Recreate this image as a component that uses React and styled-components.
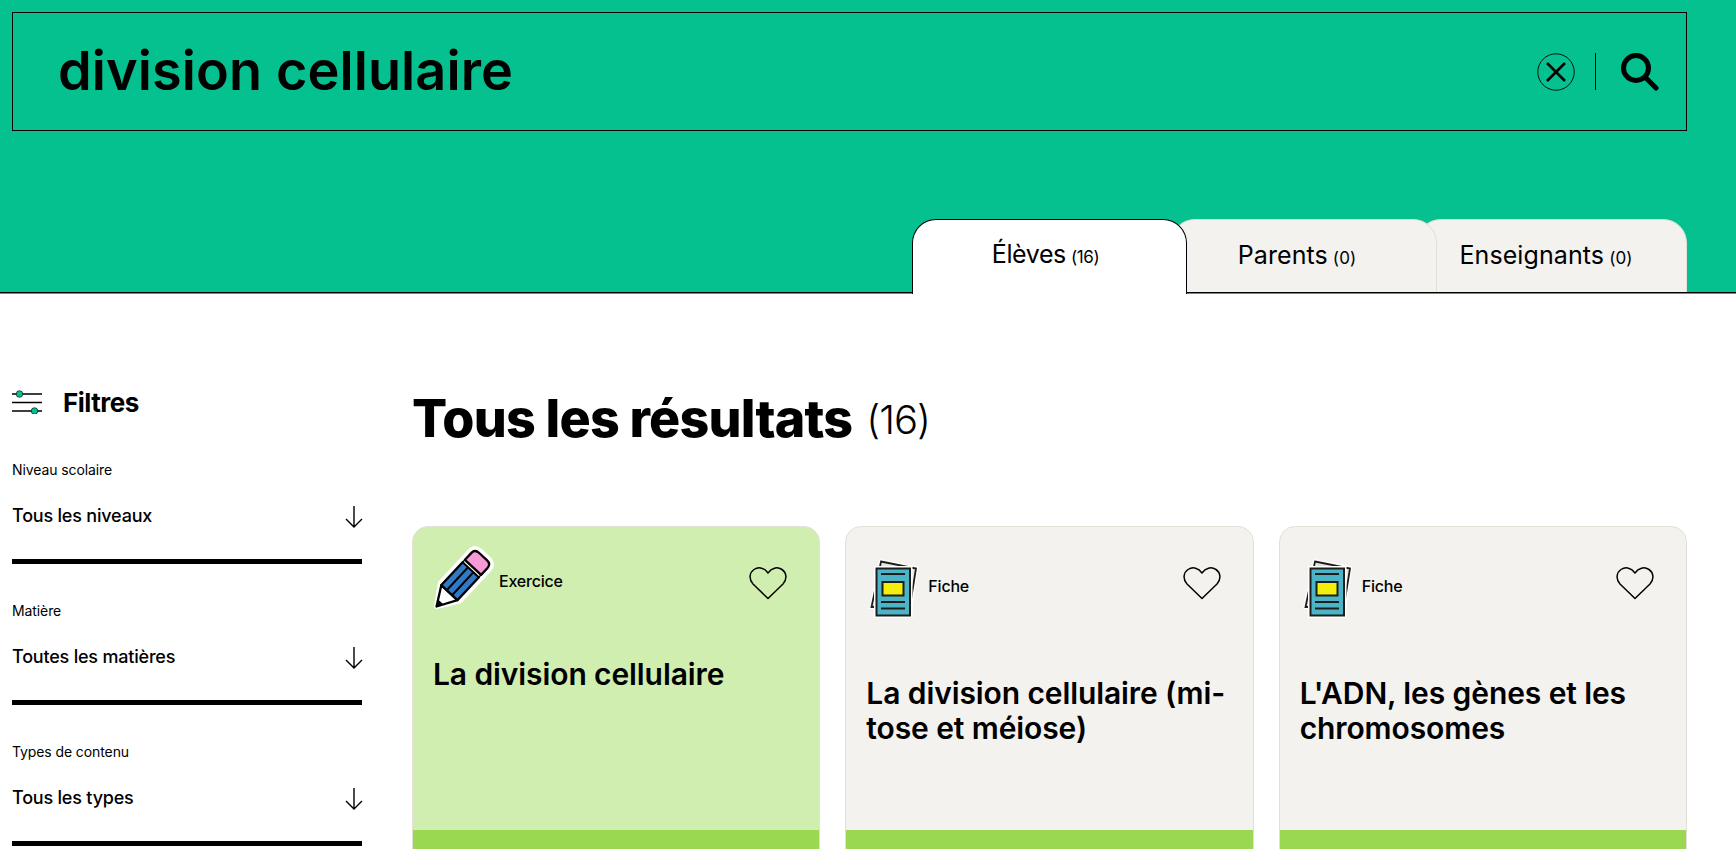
import React from "react";
import styled, { createGlobalStyle } from "styled-components";

const Colors = {
  green: "#05c18f",
  lime: "#d0eeb0",
  limeDark: "#9ad852",
  grey: "#f3f2ee",
  line: "#e4e0d8",
};

const GlobalStyle = createGlobalStyle`
  html, body {
    margin: 0;
    height: 100%;
    overflow: hidden;
    background: #fff;
    color: #000;
    font-family: Inter, "Liberation Sans", sans-serif;
  }
  * { box-sizing: border-box; }
`;

const Header = styled.header`
  height: 294px;
  background: ${Colors.green};
  padding: 12px 49px 0 12px;
  display: flex;
  flex-direction: column;
  justify-content: space-between;
`;
const SearchBox = styled.div`
  height: 119px;
  border: 1px solid #000;
  display: flex;
  align-items: center;
  padding: 0 27px 0 45px;
`;
const SearchText = styled.div`
  flex: 1;
  font-size: 54px;
  font-weight: 600;
  letter-spacing: 0.1px;
  margin-top: -2px;
`;
const IconButton = styled.button`
  display: flex;
  padding: 0;
  border: 0;
  background: none;
`;
const Divider = styled.span`
  width: 1px;
  height: 37px;
  background: #000;
  margin: 0 25px 0 20px;
`;
const TabBar = styled.nav`
  margin: 0 -49px 1px -12px;
  padding-right: 49px;
  height: 74px;
  border-bottom: 1px solid #000;
  display: flex;
  justify-content: flex-end;
`;
const Tab = styled.button`
  position: relative;
  z-index: ${(p) => p.$layer};
  width: ${(p) => p.$width}px;
  height: ${(p) => (p.$active ? 75 : 73)}px;
  margin-left: ${(p) => p.$overlap}px;
  padding: 0 ${(p) => p.$shift}px ${(p) => (p.$active ? 6 : 3)}px 0;
  border: 1px solid ${(p) => (p.$active ? "#000" : Colors.line)};
  border-bottom: 0;
  border-radius: 24px 24px 0 0;
  background: ${(p) => (p.$active ? "#fff" : Colors.grey)};
  color: #000;
  font: 400 25px Inter, "Liberation Sans", sans-serif;
  letter-spacing: ${(p) => (p.$active ? -0.4 : 0.1)}px;
`;
const TabCount = styled.span`
  font-size: 17px;
  margin-left: 5px;
`;

const Page = styled.main`
  height: 555px;
  overflow: hidden;
  padding: 96px 49px 0 12px;
  display: grid;
  grid-template-columns: 350px 1fr;
  column-gap: 50px;
`;

const FilterTitle = styled.div`
  display: flex;
  align-items: center;
  gap: 21px;
  font-size: 26px;
  font-weight: 700;
  letter-spacing: -0.5px;
  height: 24px;
  margin-bottom: 46px;
`;
const FilterGroup = styled.div`
  margin-bottom: 37px;
`;
const FilterLabel = styled.div`
  font-size: 14px;
  line-height: 20px;
  letter-spacing: -0.1px;
`;
const FilterSelect = styled.div`
  height: 84px;
  padding: 22px 0 0;
  display: flex;
  justify-content: space-between;
  align-items: flex-start;
  font-size: 18px;
  font-weight: 500;
  line-height: 28px;
  letter-spacing: -0.2px;
  border-bottom: 5px solid #000;
`;
const Arrow = styled.svg`
  width: 18px;
  height: 22px;
  margin: 4px -1px 0 0;
`;

const Results = styled.section`
  min-width: 0;
`;
const Title = styled.h1`
  margin: 0 0 80px;
  height: 56px;
  font-size: 52px;
  line-height: 58px;
  font-weight: 800;
  letter-spacing: -0.8px;
`;
const TitleCount = styled.span`
  font-size: 40px;
  font-weight: 300;
  letter-spacing: -1px;
  margin-left: 14px;
  vertical-align: 3px;
`;
const CardGrid = styled.div`
  display: grid;
  grid-template-columns: repeat(3, 1fr);
  gap: 25px;
`;
const Card = styled.article`
  height: 340px;
  border: 1px solid ${Colors.line};
  border-radius: 16px;
  background: ${(p) => (p.$tone === "lime" ? Colors.lime : Colors.grey)};
  overflow: hidden;
  display: flex;
  flex-direction: column;
`;
const CardTop = styled.div`
  height: 303px;
  padding: ${(p) => (p.$tone === "lime" ? 24 : 29)}px 20px 0;
`;
const CardHead = styled.div`
  display: flex;
  align-items: center;
  height: 60px;
`;
const CardType = styled.span`
  flex: 1;
  margin-left: ${(p) => p.$gap}px;
  font-size: 16px;
  font-weight: 500;
  letter-spacing: -0.2px;
`;
const Heart = styled.svg`
  width: 38px;
  height: 34px;
  margin: ${(p) => p.$offset}px 12px 0 0;
`;
const CardTitle = styled.h2`
  margin: ${(p) => (p.$tone === "lime" ? 46 : 60)}px 0 0;
  font-size: 30px;
  line-height: 35px;
  font-weight: 600;
  letter-spacing: -0.1px;
`;
const CardFooter = styled.div`
  flex: 1;
  background: ${Colors.limeDark};
`;
const Drawing = styled.svg`
  flex: none;
  overflow: visible;
`;

const CloseIcon = () => (
  <svg width="38" height="38" viewBox="0 0 38 38" fill="none" stroke="#000">
    <circle cx="19" cy="19" r="18.2" strokeWidth="0.9" />
    <path d="M10 10 L28 28 M28 10 L10 28" strokeWidth="2.6" />
  </svg>
);

const SearchIcon = () => (
  <svg width="38" height="38" viewBox="0 0 38 38" fill="none" stroke="#000" strokeLinecap="round">
    <circle cx="15" cy="15" r="12.5" strokeWidth="5" />
    <path d="M25 25 L35 35" strokeWidth="5" />
  </svg>
);

const FilterIcon = () => (
  <svg width="30" height="24" viewBox="0 0 30 24" fill="none">
    <path d="M0 4 H30 M0 12.5 H30 M0 21 H30" stroke="#000" strokeWidth="1.4" />
    <circle cx="7.5" cy="4" r="3.3" fill={Colors.green} stroke="#000" strokeWidth="0.6" />
    <circle cx="22.5" cy="21" r="3.3" fill={Colors.green} stroke="#000" strokeWidth="0.6" />
  </svg>
);

const ArrowIcon = () => (
  <Arrow viewBox="0 0 18 22" fill="none" stroke="#000" strokeWidth="1.4">
    <path d="M9 0 V21 M1 13 L9 21 L17 13" />
  </Arrow>
);

const HeartIcon = ({ offset }) => (
  <Heart $offset={offset} viewBox="0 0 38 34" fill="none" stroke="#000" strokeWidth="1.5" strokeLinejoin="round">
    <path d="M19 32.5 L4 18 C-0.5 13 0.5 6.5 5 3.5 C10 0.3 15.5 2 19 7 C22.5 2 28 0.3 33 3.5 C37.5 6.5 38.5 13 34 18 Z" />
  </Heart>
);

const PencilIcon = () => (
  <Drawing width="60" height="60" viewBox="0 0 60 60" fill="none" strokeLinejoin="round">
    <g transform="translate(3.5,55.5) rotate(43) scale(1.05)">
      <path d="M0 0 L-12.5 -19 V-60 Q-12.5 -67 -5 -67 H5 Q12.5 -67 12.5 -60 V-19 Z" fill="#fff" stroke="#fff" strokeWidth="5" />
      <path d="M0 0 L-10.5 -18 H10.5 Z" fill="#fff" stroke="#000" strokeWidth="2.2" />
      <path d="M0 0 L-3.5 -6 H3.5 Z" fill="#000" />
      <rect x="-10.5" y="-48" width="21" height="30" fill="#2f7ac8" stroke="#000" strokeWidth="2.2" />
      <path d="M-3.5 -48 V-18 M3.5 -48 V-18" stroke="#000" strokeWidth="2" />
      <rect x="-10.5" y="-51" width="21" height="3" fill="#fff" stroke="#000" strokeWidth="1.4" />
      <path d="M-10.5 -51 V-60 Q-10.5 -65 -5 -65 H5 Q10.5 -65 10.5 -60 V-51 Z" fill="#f79ad6" stroke="#000" strokeWidth="2.2" />
    </g>
  </Drawing>
);

const SheetIcon = () => (
  <Drawing width="50" height="60" viewBox="-4 -3 50 60" fill="none">
    <path d="M9.5 0 L48.5 7.5 L42 49 L-1 50 Z" fill="#fff" />
    <path d="M11 2.5 L46 9.5 L40 47 L1.5 48 Z" fill="#e8e4dc" stroke="#1d1d1b" strokeWidth="1.8" />
    <rect x="4" y="7" width="38.5" height="52" fill="#fff" />
    <rect x="6.5" y="9.5" width="33.5" height="47" fill="#4bb4c6" stroke="#1d1d1b" strokeWidth="2" />
    <path d="M11 15 H35 M11 43 H35 M11 49.5 H35" stroke="#1d1d1b" strokeWidth="1.8" />
    <rect x="12.5" y="23" width="21" height="13.5" fill="#f4ee0c" stroke="#1d1d1b" strokeWidth="2" />
  </Drawing>
);

const tabs = [
  { label: "Élèves", count: 16, width: 275, overlap: 0, shift: 8, layer: 3, active: true },
  { label: "Parents", count: 0, width: 266, overlap: -16, shift: 14, layer: 2 },
  { label: "Enseignants", count: 0, width: 270, overlap: -20, shift: 12, layer: 1 },
];

const filters = [
  { label: "Niveau scolaire", value: "Tous les niveaux" },
  { label: "Matière", value: "Toutes les matières" },
  { label: "Types de contenu", value: "Tous les types" },
];

const cards = [
  { type: "Exercice", title: "La division cellulaire", tone: "lime", Icon: PencilIcon, gap: 6, heart: 4 },
  { type: "Fiche", title: "La division cellulaire (mi-tose et méiose)", tone: "grey", Icon: SheetIcon, gap: 12, heart: -6 },
  { type: "Fiche", title: "L'ADN, les gènes et les chromosomes", tone: "grey", Icon: SheetIcon, gap: 12, heart: -6 },
];

const App = () => {
  return (
    <>
      <GlobalStyle />
      <Header>
        <SearchBox>
          <SearchText>division cellulaire</SearchText>
          <IconButton aria-label="Effacer"><CloseIcon /></IconButton>
          <Divider />
          <IconButton aria-label="Rechercher"><SearchIcon /></IconButton>
        </SearchBox>
        <TabBar>
          {tabs.map((t) => (
            <Tab key={t.label} $active={t.active} $width={t.width} $overlap={t.overlap} $shift={t.shift} $layer={t.layer}>
              {t.label}<TabCount>({t.count})</TabCount>
            </Tab>
          ))}
        </TabBar>
      </Header>
      <Page>
        <aside>
          <FilterTitle><FilterIcon />Filtres</FilterTitle>
          {filters.map((f) => (
            <FilterGroup key={f.label}>
              <FilterLabel>{f.label}</FilterLabel>
              <FilterSelect>{f.value}<ArrowIcon /></FilterSelect>
            </FilterGroup>
          ))}
        </aside>
        <Results>
          <Title>Tous les résultats<TitleCount>(16)</TitleCount></Title>
          <CardGrid>
            {cards.map((c) => (
              <Card key={c.title} $tone={c.tone}>
                <CardTop $tone={c.tone}>
                  <CardHead>
                    <c.Icon />
                    <CardType $gap={c.gap}>{c.type}</CardType>
                    <HeartIcon offset={c.heart} />
                  </CardHead>
                  <CardTitle $tone={c.tone}>{c.title}</CardTitle>
                </CardTop>
                <CardFooter />
              </Card>
            ))}
          </CardGrid>
        </Results>
      </Page>
    </>
  );
};

export default App;
